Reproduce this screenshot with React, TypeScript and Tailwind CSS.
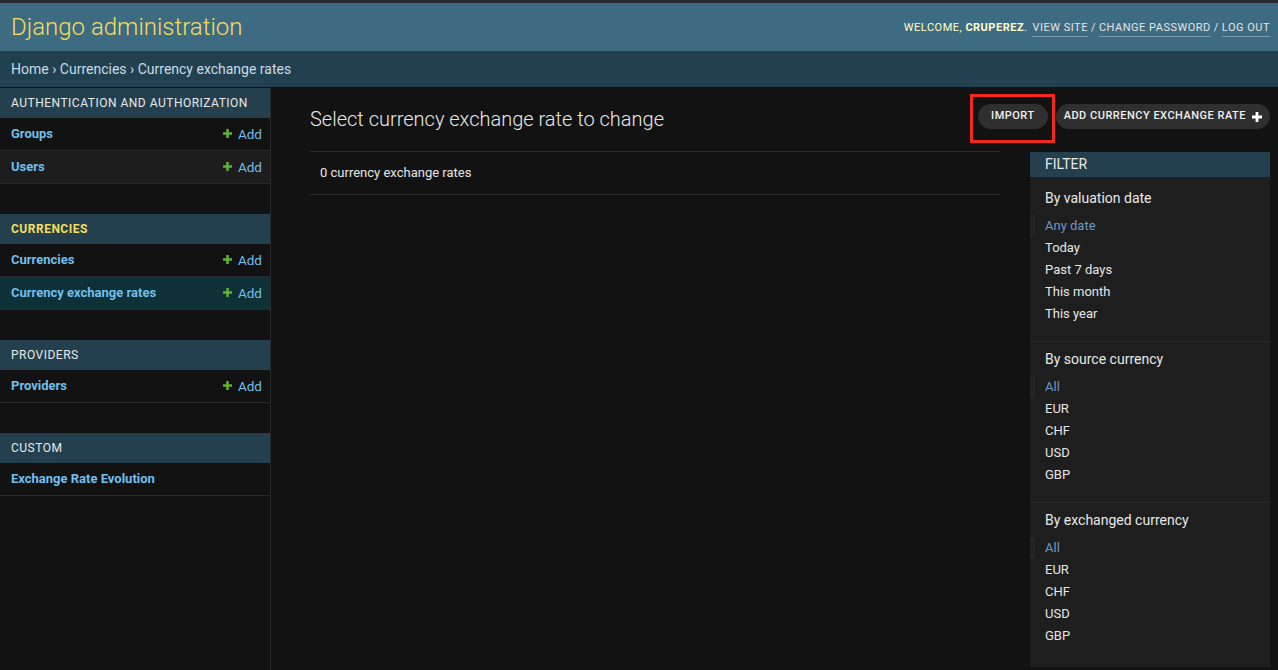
const font = { fontFamily: "Roboto, 'Liberation Sans', sans-serif" };

type Model = { name: string; add?: boolean; current?: boolean };
type Module = { title: string; current?: boolean; models: Model[] };

const modules: Module[] = [
  {
    title: "Authentication and Authorization",
    models: [
      { name: "Groups", add: true },
      { name: "Users", add: true },
    ],
  },
  {
    title: "Currencies",
    current: true,
    models: [
      { name: "Currencies", add: true },
      { name: "Currency exchange rates", add: true, current: true },
    ],
  },
  { title: "Providers", models: [{ name: "Providers", add: true }] },
  { title: "Custom", models: [{ name: "Exchange Rate Evolution" }] },
];

const filters = [
  {
    title: "By valuation date",
    choices: ["Any date", "Today", "Past 7 days", "This month", "This year"],
  },
  { title: "By source currency", choices: ["All", "EUR", "CHF", "USD", "GBP"] },
  {
    title: "By exchanged currency",
    choices: ["All", "EUR", "CHF", "USD", "GBP"],
  },
];

const PlusIcon = ({ className }: { className?: string }) => (
  <svg viewBox="0 0 10 10" className={className}>
    <path d="M3.6 0h2.8v3.6H10v2.8H6.4V10H3.6V6.4H0V3.6h3.6z" fill="currentColor" />
  </svg>
);

const Sidebar = () => (
  <nav className="w-[271px] shrink-0 border-r border-[#2b2b2b] pt-px">
    {modules.map((mod) => (
      <div key={mod.title} className="mb-[30px]">
        <div
          className={`flex h-[30px] items-center bg-[#24404f] px-[11px] text-[12px] uppercase tracking-[0.5px] ${mod.current ? "font-bold text-[#f5dd5d]" : "text-[#e8e8e8]"}`}
        >
          {mod.title}
        </div>
        {mod.models.map((m, i) => (
          <div
            key={m.name}
            className={`flex h-[33px] items-center justify-between border-b border-[#2a2a2a] pl-[11px] pr-[8px] text-[13px] ${m.current ? "bg-[#0d3136]" : i % 2 === 1 ? "bg-[#1d1d1d]" : "bg-[#121212]"}`}
          >
            <span className="font-bold text-[#71bfeb]">{m.name}</span>
            {m.add && (
              <span className="-mt-px flex items-center gap-[6px] text-[13.5px] leading-[16px] text-[#71bfeb]">
                <PlusIcon className="h-[9px] w-[9px] text-[#5fb336]" />
                Add
              </span>
            )}
          </div>
        ))}
      </div>
    ))}
  </nav>
);

const Filter = () => (
  <div className="mt-px w-[240px] shrink-0 self-start bg-[#1e1e1e] pb-[4px]">
    <h2 className="flex h-[25px] items-center bg-[#24404f] px-[15px] text-[14px] text-[#e8e8e8]">
      FILTER
    </h2>
    {filters.map((f, i) => (
      <div
        key={f.title}
        className={`${i > 0 ? "border-t border-[#2a2a2a]" : ""} pb-[16px]`}
      >
        <h3
          className={`pl-[15px] pb-[7px] text-[14px] leading-[20px] text-[#e8e8e8] ${i === 0 ? "pt-[11px]" : "pt-[7px]"}`}
        >
          {f.title}
        </h3>
        <ul className="text-[13px]">
          {f.choices.map((c, j) => (
            <li
              key={c}
              className={`flex h-[22px] items-center ${j === 0 ? "border-l-[5px] border-[#242424] pl-[10px] text-[#6e97cb]" : "pl-[15px] text-[#e6e6e6]"}`}
            >
              {c}
            </li>
          ))}
        </ul>
      </div>
    ))}
  </div>
);

export default function App() {
  return (
    <div className="flex min-h-screen flex-col bg-[#121212]" style={font}>
      <div className="h-[3px] bg-[#2a2a33]" />
      <header className="flex h-[48px] items-center justify-between bg-[#3d6b82] pl-[11px] pr-[8px]">
        <h1 className="text-[24px] font-light text-[#f5dd5d]">
          Django administration
        </h1>
        <div className="flex items-center pt-[3px] text-[11px] uppercase tracking-[0.5px] text-[#ffffcc]">
          <span>
            Welcome, <strong className="font-bold">cruperez</strong>.
          </span>
          <span className="ml-[5px] border-b border-[#7d9aab] text-[#e4e4e4]">
            View site
          </span>
          <span className="mx-[3px] text-[#e4e4e4]">/</span>
          <span className="border-b border-[#7d9aab] text-[#e4e4e4]">
            Change password
          </span>
          <span className="mx-[3px] text-[#e4e4e4]">/</span>
          <span className="border-b border-[#7d9aab] text-[#e4e4e4]">
            Log out
          </span>
        </div>
      </header>
      <div className="flex h-[36px] items-center bg-[#224150] px-[11px] text-[14px] text-[#c9dbe6]">
        Home › Currencies › Currency exchange rates
      </div>
      <div className="flex flex-1">
        <Sidebar />
        <main className="flex-1 pl-[39px] pr-[8px]">
          <div className="flex items-center justify-between pt-[7px]">
            <h1 className="text-[20px] font-light text-[#e8e8e8]">
              Select currency exchange rate to change
            </h1>
            <div className="flex items-start gap-px">
              <div className="flex border-[3px] border-[#f0281d] pb-[11px] pl-[5px] pr-[4px] pt-[7px]">
                <button className="h-[25px] rounded-full bg-[#2f2f2f] px-[13px] text-[11px] font-medium tracking-[0.5px] text-[#f0f0f0]">
                  IMPORT
                </button>
              </div>
              <button className="mt-[10px] flex h-[25px] items-center gap-[6px] rounded-full bg-[#2f2f2f] pl-[8px] pr-[8px] text-[11px] font-medium tracking-[0.5px] text-[#f0f0f0]">
                ADD CURRENCY EXCHANGE RATE
                <PlusIcon className="h-[10px] w-[10px] text-white" />
              </button>
            </div>
          </div>
          <div className="mt-[8px] flex gap-[30px]">
            <div className="flex-1">
              <div className="flex h-[44px] items-center border-y border-[#2a2a2a] px-[10px] text-[13px] text-[#e6e6e6]">
                0 currency exchange rates
              </div>
            </div>
            <Filter />
          </div>
        </main>
      </div>
    </div>
  );
}
